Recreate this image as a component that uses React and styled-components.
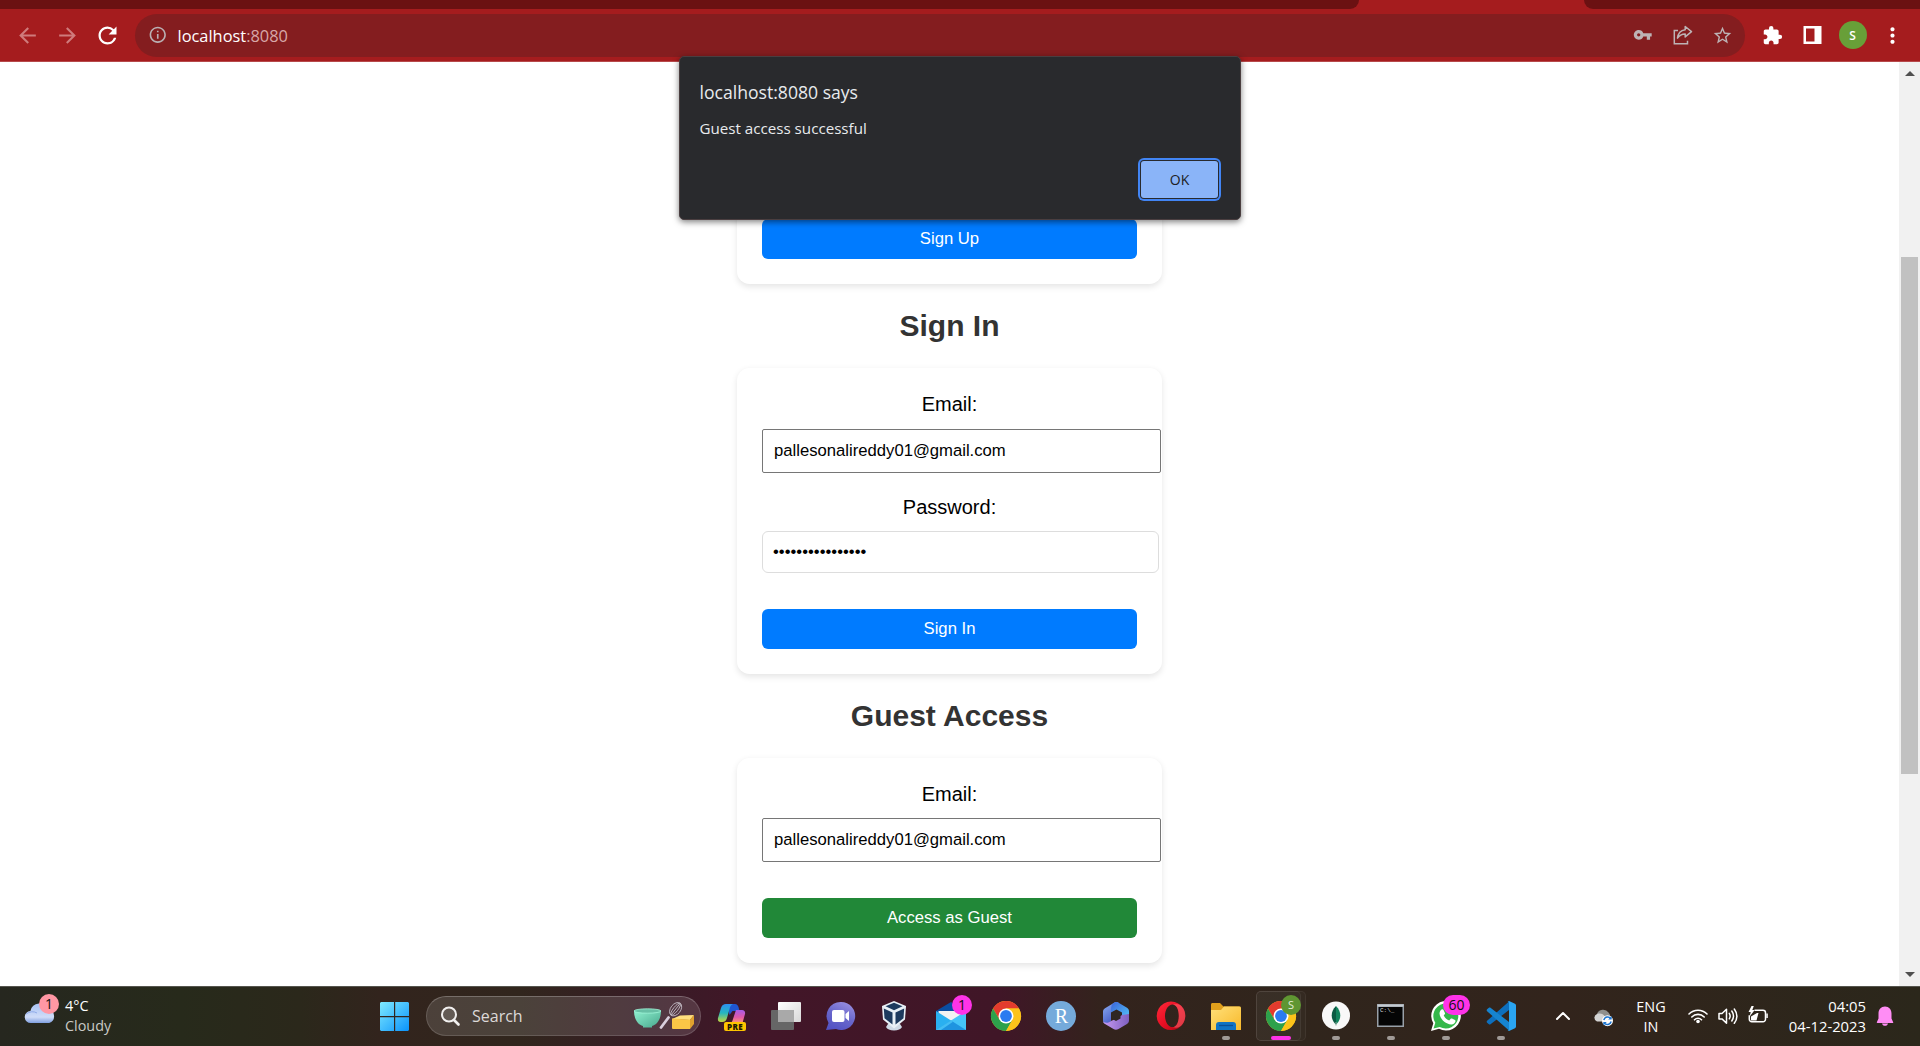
import React from "react";
import styled, { createGlobalStyle } from "styled-components";
import {
  MdArrowBack,
  MdArrowForward,
  MdRefresh,
  MdInfoOutline,
  MdVpnKey,
  MdStarBorder,
  MdExtension,
  MdMoreVert,
} from "react-icons/md";

const uiFont = `"Open Sans", "Noto Sans", sans-serif`;
const pageFont = `"Liberation Sans", Arial, sans-serif`;

const GlobalStyle = createGlobalStyle`
  * { box-sizing: border-box; }
  body { margin: 0; overflow: hidden; background: #fff; }
  svg { display: block; flex: none; }
`;

const Screen = styled.div`
  display: flex;
  flex-direction: column;
  width: 1920px;
  height: 1046px;
  position: relative;
  overflow: hidden;
  font-family: ${uiFont};
`;

/* ---------- browser chrome ---------- */

const TabStrip = styled.div`
  display: flex;
  justify-content: space-between;
  height: 9px;
  flex: none;
  background: #a51c1e;
`;

const StripSide = styled.div`
  width: ${(p) => p.$width}px;
  background: #6b1112;
  border-radius: ${(p) => (p.$left ? "0 0 10px 0" : "0 0 0 10px")};
`;

const Toolbar = styled.div`
  display: flex;
  align-items: center;
  height: 53px;
  flex: none;
  background: #a51c1e;
  border-bottom: 1px solid #b7494b;
`;

const NavButtons = styled.div`
  display: flex;
  width: 135px;
  padding-left: 15px;
  gap: 15px;
  flex: none;
`;

const IconBox = styled.span`
  display: flex;
  align-items: center;
  justify-content: center;
  width: 25px;
  height: 26px;
  flex: none;
  color: ${(p) => p.$color};
`;

const Omnibox = styled.div`
  display: flex;
  align-items: center;
  width: 1610px;
  height: 43px;
  padding: 0 10px;
  border-radius: 22px;
  background: #841d1f;
  flex: none;
`;

const Url = styled.span`
  flex: 1;
  margin-left: 7.5px;
  padding-top: 2px;
  font-size: 16.4px;
  line-height: 24px;
  color: #fff;
`;

const Port = styled.span`
  color: #d8a7a8;
`;

const OmniActions = styled.div`
  display: flex;
  gap: 15px;
`;

const BrowserActions = styled.div`
  display: flex;
  align-items: center;
  gap: 15px;
  padding-left: 15px;
`;

const Avatar = styled.span`
  display: flex;
  align-items: center;
  justify-content: center;
  width: 28px;
  height: 28px;
  margin: 0 -1.5px;
  border-radius: 50%;
  background: #689f38;
  color: #fff;
  font-size: 12px;
  font-weight: 600;
`;

/* ---------- page ---------- */

const Viewport = styled.div`
  display: flex;
  height: 924px;
  flex: none;
  background: #fff;
`;

const Content = styled.main`
  display: flex;
  flex-direction: column;
  align-items: center;
  width: 1899px;
  padding-top: 132px;
  overflow: hidden;
  font-family: ${pageFont};
`;

const Card = styled.section`
  display: flex;
  flex-direction: column;
  align-items: stretch;
  width: 425px;
  height: ${(p) => p.$height}px;
  padding: 25px;
  flex: none;
  border-radius: 12.5px;
  background: #fff;
  box-shadow: 0 2.5px 6px rgba(0, 0, 0, 0.1);
`;

const Heading = styled.h2`
  margin: 25px 0;
  height: 34px;
  flex: none;
  font-size: 30px;
  line-height: 34px;
  font-weight: 700;
  color: #333;
`;

const Label = styled.label`
  height: 24px;
  margin-top: ${(p) => p.$top}px;
  font-size: 20px;
  line-height: 24px;
  text-align: center;
  color: #000;
`;

const Field = styled.input`
  flex: none;
  width: ${(p) => (p.$soft ? 397 : 399)}px;
  height: ${(p) => (p.$soft ? 42 : 44)}px;
  margin: ${(p) => p.$top}px 0 0;
  padding: ${(p) => (p.$soft ? "0 10px 1px" : "0 11px")};
  border: 1px solid ${(p) => (p.$soft ? "#ddd" : "#767676")};
  border-radius: ${(p) => (p.$soft ? "6px" : "2px")};
  background: #fff;
  outline: none;
  color: #000;
  font-family: ${pageFont};
  font-size: 16.67px;
`;

const Submit = styled.button`
  flex: none;
  height: 40px;
  margin-top: auto;
  padding: 0;
  border: 0;
  border-radius: 6px;
  background: ${(p) => p.$bg};
  color: #fff;
  font-family: ${pageFont};
  font-size: 16.67px;
`;

const Scrollbar = styled.div`
  display: flex;
  flex-direction: column;
  align-items: center;
  width: 21px;
  padding: 9px 0;
  background: #f1f1f1;
`;

const Arrow = styled.span`
  width: 0;
  height: 0;
  border: 5px solid transparent;
  border-${(p) => (p.$up ? "bottom" : "top")}-color: #505050;
  border-${(p) => (p.$up ? "top" : "bottom")}-width: 0;
`;

const Thumb = styled.span`
  width: 17px;
  height: 517px;
  margin-top: 181px;
  margin-bottom: auto;
  background: #c1c1c1;
`;

/* ---------- alert ---------- */

const Dialog = styled.div`
  position: absolute;
  left: 679px;
  top: 56px;
  display: flex;
  flex-direction: column;
  width: 562px;
  height: 164px;
  padding: 20px 20px 21px 19.5px;
  border: 1px solid #4a3e40;
  border-radius: 5px;
  background: #292a2d;
  box-shadow: 0 2px 6px rgba(0, 0, 0, 0.5);
  color: #e8eaed;
`;

const DialogTitle = styled.div`
  margin-top: 2px;
  font-size: 17.6px;
  line-height: 26px;
`;

const DialogText = styled.div`
  margin-top: 11px;
  font-size: 15.15px;
  line-height: 24px;
`;

const OkButton = styled.button`
  align-self: flex-end;
  width: 77px;
  height: 37px;
  margin: auto 2px 0 0;
  padding: 0;
  border: 0;
  border-radius: 3px;
  background: #8ab4f8;
  box-shadow: 0 0 0 1px #292a2d, 0 0 0 3px #4285f4;
  color: #202124;
  font-family: ${uiFont};
  font-size: 14px;
`;

/* ---------- taskbar ---------- */

const Taskbar = styled.footer`
  display: flex;
  height: 60px;
  flex: none;
  border-top: 1px solid #55554e;
  background: linear-gradient(
    90deg,
    #26271f 0,
    #272a1b 180px,
    #2b281b 300px,
    #32241d 380px,
    #31261d 520px,
    #381c26 650px,
    #421628 760px,
    #401627 1000px,
    #33231d 1100px,
    #30251c 1300px,
    #32241c 1560px,
    #2b271b 1920px
  );
`;

const Weather = styled.div`
  display: flex;
  width: 373px;
  padding-left: 20px;
  flex: none;
`;

const WeatherIcon = styled.div`
  position: relative;
  width: 45px;
  flex: none;
`;

const TwoLines = styled.div`
  display: flex;
  flex-direction: column;
  align-items: ${(p) => p.$align};
  padding-top: ${(p) => p.$top || 9}px;
  font-size: ${(p) => p.$size || 14.4}px;
  line-height: 20px;
  color: #fff;
`;

const Muted = styled.span`
  color: #c9c9c5;
`;

const StartCell = styled.div`
  width: 53px;
  flex: none;
`;

const SearchPill = styled.div`
  display: flex;
  align-items: center;
  width: 275px;
  height: 40px;
  margin: 9px 2px 0 0;
  flex: none;
  border: 1px solid rgba(255, 255, 255, 0.14);
  border-top-color: rgba(255, 255, 255, 0.24);
  border-radius: 20px;
  background: rgba(255, 255, 255, 0.13);
`;

const SearchText = styled.span`
  flex: 1;
  margin-left: 11px;
  font-size: 16px;
  line-height: 24px;
  color: #dcd9d8;
`;

const Apps = styled.div`
  display: flex;
  flex: none;
`;

const AppCell = styled.div`
  position: relative;
  width: 55px;
  height: 59px;
  flex: none;
`;

const ActiveTile = styled.span`
  position: absolute;
  left: ${(p) => p.$left}px;
  top: 4px;
  width: ${(p) => p.$width}px;
  height: 50px;
  border: 1px solid rgba(255, 255, 255, 0.06);
  border-radius: 5px;
  background: rgba(255, 255, 255, 0.025);
`;

const AppIcon = styled.svg`
  position: relative;
`;

const Badge = styled.span`
  position: absolute;
  left: ${(p) => p.$left}px;
  top: ${(p) => p.$top}px;
  width: ${(p) => p.$width}px;
  height: 20px;
  border-radius: 10px;
  background: ${(p) => p.$bg || "#ff33e8"};
  color: ${(p) => p.$color || "#111"};
  font-size: ${(p) => p.$size || 14}px;
  line-height: 19px;
  text-align: center;
`;

const Indicator = styled.span`
  position: absolute;
  left: ${(p) => (p.$active ? 18 : 24)}px;
  top: 49px;
  width: ${(p) => (p.$active ? 20 : 8)}px;
  height: 4px;
  border-radius: 2px;
  background: ${(p) => (p.$active ? "#ff33e8" : "#a09a96")};
`;

const PreTag = styled.span`
  position: absolute;
  left: 21px;
  top: 35px;
  width: 22px;
  height: 9px;
  border-radius: 2px;
  background: #fdc400;
  color: #1c1600;
  font-size: 8px;
  font-weight: 800;
  line-height: 9.5px;
  letter-spacing: 0.4px;
  text-align: center;
`;

const LetterR = styled.span`
  position: absolute;
  left: 13px;
  top: 14px;
  width: 31px;
  color: #fff;
  font-family: "Liberation Serif", serif;
  font-size: 20px;
  line-height: 30px;
  text-align: center;
`;

const Prompt = styled.span`
  position: absolute;
  left: 17px;
  top: 20px;
  color: #ddd;
  font-family: "Liberation Mono", monospace;
  font-size: 6px;
  line-height: 7px;
`;

const Tray = styled.div`
  display: flex;
  margin-left: auto;
  color: #fff;
`;

const TraySlot = styled.div`
  display: flex;
  justify-content: center;
  width: ${(p) => p.$width}px;
  flex: none;
`;

const TrayDate = styled.div`
  display: flex;
  justify-content: flex-end;
  width: 84px;
  flex: none;
`;

/* ---------- icons ---------- */

const ShareIcon = () => (
  <svg width="22" height="22" viewBox="0 0 22 22" fill="none" stroke="#bdb3b5" strokeWidth="1.5">
    <path d="M6 6.500H2.300v13.200h13.200v-3" />
    <path d="M13.200 2.500l6.300 5.200-6.300 5.200V10C9.600 10 7.300 11.300 5.500 14.200 6 9.600 8.400 6.300 13.200 5.700z" strokeLinejoin="round" />
  </svg>
);

const PanelIcon = () => (
  <svg width="20" height="20" viewBox="0 0 20 20">
    <path fill="#fff" fillRule="evenodd" d="M.5 1h18v18h-18zM3 3.400v13.200h8.500V3.400z" />
  </svg>
);

const CloudIcon = () => (
  <svg width="44" height="59" viewBox="20 987 44 59">
    <defs>
      <linearGradient id="cloud" x1="0" y1="0" x2="0" y2="1">
        <stop offset="0" stopColor="#a9c3f5" />
        <stop offset="0.700" stopColor="#cfdcf8" />
        <stop offset="1" stopColor="#7f9fe0" />
      </linearGradient>
    </defs>
    <path fill="url(#cloud)" d="M31 1023a6 6 0 0 1-.6-12 9.500 9.500 0 0 1 18.200-1.500 7 7 0 0 1 .6 13.500z" />
    <path d="M26 1014q6-4 11-1" fill="none" stroke="#8fabe8" strokeWidth="1" />
  </svg>
);

const StartIcon = () => (
  <svg width="44" height="59" viewBox="373 987 44 59">
    <defs>
      <linearGradient id="win" x1="380" y1="1002" x2="409" y2="1031" gradientUnits="userSpaceOnUse">
        <stop offset="0" stopColor="#7feaff" />
        <stop offset="1" stopColor="#0a93fb" />
      </linearGradient>
    </defs>
    <path fill="url(#win)" d="M381 1002h13v14h-14v-13zM395.200 1002h12.800l1 1v13h-13.800zM380 1017.200h14v13.800h-13l-1-1zM395.200 1017.200H409V1030l-1 1h-12.800z" />
  </svg>
);

const Magnifier = () => (
  <svg width="34" height="38" viewBox="427 997 34 38" fill="none" stroke="#f1efee">
    <circle cx="449" cy="1014.500" r="7" strokeWidth="2" fill="#ffffff22" />
    <path d="M454 1020l4.500 4.500" strokeWidth="2.600" strokeLinecap="round" />
  </svg>
);

const Baking = () => (
  <svg width="70" height="38" viewBox="630 997 70 38">
    <defs>
      <linearGradient id="bowl" x1="0" y1="0" x2="1" y2="1">
        <stop offset="0" stopColor="#8ff0cf" />
        <stop offset="1" stopColor="#48a88d" />
      </linearGradient>
    </defs>
    <path fill="url(#bowl)" d="M634 1011c0 8 4 14 9 15v1.500h9V1026c5-1 9-7 9-15z" />
    <ellipse cx="647.500" cy="1011" rx="13.500" ry="2.200" fill="#68c0a6" stroke="#9ff5d8" strokeWidth="0.800" />
    <g fill="none" stroke="#bcb4bd" strokeWidth="0.900" transform="rotate(38 675 1010)">
      <ellipse cx="675" cy="1009" rx="5" ry="7.500" />
      <ellipse cx="675" cy="1009" rx="2.300" ry="7.500" />
      <path d="M675 1001.500v15" />
    </g>
    <path d="M661 1027.500l7.500-10" stroke="#d9cfdd" strokeWidth="2.800" strokeLinecap="round" />
    <path d="M672 1019l8-3.500 14-.5-4 5z" fill="#ffe07e" />
    <path d="M672 1018.500l18 1.200v9.300h-17q-1 0-1-1z" fill="#fbc646" />
    <path d="M690 1019.700l4-4.700v9l-4 5z" fill="#e0a22e" />
  </svg>
);

const cellBox = (i) => `${703 + i * 55} 987 55 59`;

const Icon = ({ i, children }) => (
  <AppIcon width="55" height="59" viewBox={cellBox(i)}>
    {children}
  </AppIcon>
);

const ChromeLogo = ({ cx }) => (
  <g transform={`translate(${cx} 1016)`}>
    <circle r="15" fill="#fbc116" />
    <path d="M-13 -7.500A15 15 0 0 1 13 -7.500L0 -7.500L-6.500 3.750Z" fill="#e33b2e" />
    <path d="M-13 -7.500A15 15 0 0 0 0 15L6.500 3.750L0 0L-6.500 3.750Z" fill="#2da14c" />
    <path d="M0 15A15 15 0 0 0 13 -7.500L0 -7.500L6.500 3.750Z" fill="#fcc31a" />
    <circle r="7.500" fill="#fff" />
    <circle r="5.900" fill="#2b7bf0" />
  </g>
);

const CopilotLogo = () => (
  <Icon i={0}>
    <defs>
      <linearGradient id="cop1" x1="0" y1="0" x2="0" y2="1">
        <stop offset="0" stopColor="#2d8ff0" />
        <stop offset="0.500" stopColor="#25b5c0" />
        <stop offset="1" stopColor="#c6d63a" />
      </linearGradient>
      <linearGradient id="cop2" x1="0" y1="0" x2="0" y2="1">
        <stop offset="0" stopColor="#a65ce8" />
        <stop offset="0.550" stopColor="#e058a8" />
        <stop offset="1" stopColor="#ff9a70" />
      </linearGradient>
    </defs>
    <path fill="#1f56d0" d="M727 1004h8c2 0 3 1.500 3.500 3l1 4h-7l-3 4z" />
    <path fill="url(#cop1)" d="M726 1004h7c-2 1-3 2.500-3.500 5l-2.500 9c-.8 2.500-2 4-4.500 4h-2c-2 0-3-1.500-2.500-4l3-10c.8-2.500 2.500-4 5-4z" />
    <path fill="url(#cop2)" d="M736 1010h6c2.500 0 3.500 2 3 4l-2.500 9h-12c1.500-1 2-2 2.500-4z" />
  </Icon>
);

const TaskViewLogo = () => (
  <Icon i={1}>
    <defs>
      <linearGradient id="tv" x1="0" y1="0" x2="1" y2="1">
        <stop offset="0" stopColor="#fff" />
        <stop offset="1" stopColor="#d8d8d8" />
      </linearGradient>
    </defs>
    <rect x="771" y="1010" width="23" height="20" rx="1" fill="#666" />
    <rect x="778" y="1002" width="23" height="20" rx="1" fill="url(#tv)" />
    <rect x="778" y="1010" width="16" height="12" fill="#a9a9a9" />
  </Icon>
);

const ChatLogo = () => (
  <Icon i={2}>
    <defs>
      <linearGradient id="chat" x1="0.800" y1="0" x2="0.300" y2="1">
        <stop offset="0" stopColor="#9a8fe0" />
        <stop offset="0.500" stopColor="#6a68cc" />
        <stop offset="1" stopColor="#5352c4" />
      </linearGradient>
    </defs>
    <path fill="url(#chat)" d="M841 1002a14 14 0 1 1-5 27l-10 1 2.500-7A14 14 0 0 1 841 1002z" />
    <rect x="832" y="1010" width="12.500" height="12" rx="2" fill="#fff" />
    <path fill="#fff" d="M845.500 1014l3.500-3v10l-3.500-3z" />
  </Icon>
);

const BoxLogo = () => (
  <Icon i={3}>
    <path fill="#cfdae6" d="M888 1024h12l2 3c-1 2-4 3.500-8 3.500s-7-1.500-8-3.500z" />
    <path fill="#e9f0f6" d="M894 1001l12 5-1 13.500-11 9-11-9-1-13.500z" />
    <path fill="#1d3a5e" d="M894 1002.800l8.500 3.500-8.500 4-8.500-4z" />
    <path fill="#1d3a5e" d="M883.800 1008.500l8.700 4v12l-8-6.300zM904.200 1008.500l-8.700 4v12l8-6.300z" />
  </Icon>
);

const MailLogo = () => (
  <Icon i={4}>
    <path fill="#0a4da0" d="M936 1011l15-9 15 9v8h-30z" />
    <path fill="#f2f2f2" d="M938.500 1011h25v10l-12.500 6-12.500-6z" />
    <path fill="#2ab0f0" d="M936 1011l30 19h-30z" />
    <path fill="#45c4f8" d="M966 1011v19h-30z" />
    <path fill="#1e94e0" d="M951 1020.500l15 9.500h-30z" />
    <path fill="#43bdf3" d="M936 1030l15-9.500 2 1.300-12 8.200z" />
  </Icon>
);

const M365Logo = () => (
  <Icon i={7}>
    <defs>
      <linearGradient id="m1" x1="0" y1="0" x2="0.600" y2="1">
        <stop offset="0" stopColor="#8fb2f5" />
        <stop offset="1" stopColor="#4257c4" />
      </linearGradient>
      <linearGradient id="m2" x1="0" y1="0" x2="1" y2="1">
        <stop offset="0" stopColor="#3c64d8" />
        <stop offset="1" stopColor="#53c8fb" />
      </linearGradient>
      <linearGradient id="m3" x1="0" y1="0" x2="1" y2="0">
        <stop offset="0" stopColor="#c79af0" />
        <stop offset="1" stopColor="#7e5fc0" />
      </linearGradient>
    </defs>
    <path fill="url(#m1)" d="M1115 1002.300l-10 6c-1.300.8-2 2-2 3.500v8.700c0 2 1.500 3.500 3.500 3.500s4.500-1.500 4.500-4v-8l8-9c-1.500-1-2.500-1.500-4-.7z" />
    <path fill="url(#m2)" d="M1113.500 1003c2-1.300 3.500-1.300 5.500 0l8 4.700c1.300.8 2 2 2 3.500v8.800c-2-3-4-4-7-4v-3.500l-5.500-3-5.500 3c0-4 0-8 2.500-9.500z" />
    <path fill="url(#m3)" d="M1129 1014v6.500c0 1.500-.7 2.700-2 3.500l-8.500 5c-1.700 1-3.500 1-5 0l-8.500-5c-1-.6-1.600-1.500-2-2.500 3 2 5.500 1.500 8-.5l4.500-2 6.500-4z" />
    <path fill="#2f2723" d="M1116 1010.500l4.500 2.600v5.300l-4.500 2.600-4.500-2.600v-5.300z" />
  </Icon>
);

const OperaLogo = () => (
  <Icon i={8}>
    <defs>
      <linearGradient id="op" x1="0" y1="0" x2="1" y2="1">
        <stop offset="0" stopColor="#ff2a3a" />
        <stop offset="0.500" stopColor="#e80f24" />
        <stop offset="1" stopColor="#a80410" />
      </linearGradient>
    </defs>
    <path fill="url(#op)" fillRule="evenodd" d="M1171 1001.500a14.300 14.300 0 1 0 .01 0zM1172.500 1004.500c4 0 6.300 5 6.300 11.300s-2.300 11.300-6.300 11.300-7.500-5-7.500-11.300 3.500-11.300 7.500-11.300z" />
    <path fill="#ff6670" opacity="0.550" d="M1172.500 1004.500c5-1.500 8 0 9.500 2.300 2.500 2.500 3.300 6 3.300 9s-1 6-3 8.700c-2 2.500-5 4-9.800 2.600 4 0 6.300-5 6.300-11.300s-2.300-11.300-6.300-11.300z" />
  </Icon>
);

const FolderLogo = () => (
  <Icon i={9}>
    <defs>
      <linearGradient id="fold" x1="0" y1="0" x2="1" y2="1">
        <stop offset="0" stopColor="#ffe07a" />
        <stop offset="1" stopColor="#f8b92a" />
      </linearGradient>
    </defs>
    <path fill="#e0a01c" d="M1211 1012v-7.500c0-.8.600-1.500 1.500-1.500h7.500l3.500 3.500h16v8z" />
    <path fill="url(#fold)" d="M1211 1010h10l3-3.500h15.500c1 0 1.500.7 1.500 1.500v22h-30z" />
    <path fill="#1173c4" d="M1216 1030v-5c0-2 1-3 3-3h14c2 0 3 1 3 3v5z" />
    <path d="M1219 1025.500h14" stroke="#0b4f96" strokeWidth="1.300" />
  </Icon>
);

const MongoLogo = () => (
  <Icon i={11}>
    <circle cx="1336" cy="1015.500" r="14" fill="#f8f8f8" />
    <path fill="#11835c" d="M1336 1006c4 4 4.800 8 4 12-.7 3-2.200 5-4 6.500z" />
    <path fill="#0a5a43" d="M1336 1006c-4 4-4.800 8-4 12 .7 3 2.200 5 4 6.500z" />
    <path d="M1336 1022v3.500" stroke="#8fa99b" strokeWidth="1" />
  </Icon>
);

const CmdLogo = () => (
  <Icon i={12}>
    <rect x="1377" y="1004" width="27" height="23" fill="#98a0a8" />
    <rect x="1377.500" y="1004.500" width="26" height="2" fill="#c4cad0" />
    <rect x="1378.500" y="1007" width="24" height="18.500" fill="#050505" />
  </Icon>
);

const WhatsAppLogo = () => (
  <Icon i={13}>
    <path fill="#fff" d="M1431 1031l2.300-7.700a14.800 14.800 0 1 1 5.700 5.500z" />
    <path fill="#35b84b" d="M1433.500 1028.500l1.800-5.700a12.500 12.500 0 1 1 4.500 4.200z" />
    <path fill="#fff" d="M1441.500 1009.500c.6-.5 1.500-.5 1.900.2l1.500 3.200c.2.500.1.900-.2 1.300l-1 1.300c1.300 2.500 3 4 5.500 5l1.500-1.700c.3-.4.800-.5 1.300-.3l3 1.500c.5.300.6.7.5 1.300-.4 2-2.200 3.300-4.300 3.200-6-.5-11.500-6-11.700-11 0-1.500.8-3 2-4z" />
  </Icon>
);

const CodeLogo = () => (
  <Icon i={14}>
    <path fill="#0d6fbd" d="M1509 1001.500v8.500l-18.500 14.300c-.5.400-1.100.4-1.600 0l-1.800-1.600c-.6-.5-.6-1.400 0-1.900z" />
    <path fill="#1684d0" d="M1509 1030.500V1022l-18.500-14.300c-.5-.4-1.100-.4-1.600 0l-1.800 1.600c-.6.500-.6 1.400 0 1.900z" />
    <path fill="#2aa5f2" d="M1509 1001l6 2.800c.6.300 1 .9 1 1.500v21.400c0 .6-.4 1.200-1 1.500l-6 2.800-1.500-.8c.9.400 1.500-.3 1.500-1.200v-26c0-.9-.6-1.600-1.500-1.200z" />
  </Icon>
);

const ChevronIcon = () => (
  <svg width="30" height="59" viewBox="1548 987 30 59" fill="none" stroke="#fff" strokeWidth="2">
    <path d="M1557 1019l6-6 6 6" strokeLinecap="round" strokeLinejoin="round" />
  </svg>
);

const SyncCloudIcon = () => (
  <svg width="30" height="59" viewBox="1588 987 30 59">
    <path fill="#8f8f8d" d="M1597 1014a6.500 6.500 0 0 1 11.500-1.500 5 5 0 0 1 1 6l-6 3z" />
    <path fill="#d4d4d4" d="M1597 1021.500a4 4 0 0 1 0-7.500c4-1 6 0 8 2.700l1 4.800z" />
    <circle cx="1607.500" cy="1020.700" r="5.500" fill="#fff" />
    <path d="M1603.800 1020a4 4 0 0 1 7-1.500M1611.200 1021.500a4 4 0 0 1-7 1.500" fill="none" stroke="#1a73cf" strokeWidth="1.500" />
    <path d="M1611.700 1016v3.500h-3.500zM1603.300 1025.500v-3.500h3.500z" fill="#1a73cf" />
  </svg>
);

const WifiIcon = () => (
  <svg width="24" height="59" viewBox="1686 987 24 59" fill="none" stroke="#fff" strokeWidth="1.600" strokeLinecap="round">
    <path d="M1689 1014a12.700 12.700 0 0 1 18 0M1691.800 1017a8.700 8.700 0 0 1 12.400 0M1694.500 1019.800a5 5 0 0 1 7 0" />
    <circle cx="1698" cy="1021.500" r="1.300" fill="#fff" stroke="none" />
    <circle cx="1698" cy="1021.500" r="1" fill="#fff" />
  </svg>
);

const SpeakerIcon = () => (
  <svg width="24" height="59" viewBox="1716 987 24 59" fill="none" stroke="#fff" strokeWidth="1.500" strokeLinecap="round" strokeLinejoin="round">
    <path d="M1719 1013.500h3l4.500-4.300v14l-4.500-4.300h-3z" />
    <path d="M1729.300 1013.300q1.700 2.700 0 5.500M1731.800 1011q3.400 5 0 10M1734.300 1009q5.200 7.200 0 14.300" />
  </svg>
);

const BatteryIcon = () => (
  <svg width="24" height="59" viewBox="1746 987 24 59">
    <path d="M1754.500 1010.300h8.500a2.500 2.500 0 0 1 2.500 2.500v6.400a2.500 2.500 0 0 1-2.500 2.500h-11.200a2.500 2.500 0 0 1-2.500-2.500v-4" fill="none" stroke="#fff" strokeWidth="1.500" />
    <path fill="#fff" d="M1766.300 1013.500h1.500v4.500h-1.500zM1751 1020.500v-4l6-3.500 1.500 0-2 7.500zM1751.500 1006l-3 6h2.200l-1 4.500 5-6.500h-2.400l1.500-4z" />
  </svg>
);

const BellIcon = () => (
  <svg width="54" height="59" viewBox="1866 987 54 59" fill="#ff8df5">
    <path d="M1885 1006.500c4 0 6.500 3 6.500 7v5l1.700 3.700c.2.500-.1.800-.6.800h-15.200c-.5 0-.8-.3-.6-.8l1.700-3.700v-5c0-4 2.500-7 6.500-7z" />
    <path d="M1882 1023.500h6c-.4 1.500-1.500 2.300-3 2.300s-2.600-.8-3-2.300z" />
  </svg>
);

/* ---------- app ---------- */

const EMAIL = "pallesonalireddy01@gmail.com";
const PASSWORD = "•".repeat(16);

export default function App() {
  return (
    <Screen>
      <GlobalStyle />
      <TabStrip>
        <StripSide $left $width={1359} />
        <StripSide $width={336} />
      </TabStrip>
      <Toolbar>
        <NavButtons>
          <IconBox $color="#cf7b7c"><MdArrowBack size={25} /></IconBox>
          <IconBox $color="#cf7b7c"><MdArrowForward size={25} /></IconBox>
          <IconBox $color="#fff"><MdRefresh size={27} /></IconBox>
        </NavButtons>
        <Omnibox>
          <IconBox $color="#bab0b3"><MdInfoOutline size={19.5} /></IconBox>
          <Url>localhost<Port>:8080</Port></Url>
          <OmniActions>
            <IconBox $color="#bdb3b5"><MdVpnKey size={19.5} /></IconBox>
            <IconBox><ShareIcon /></IconBox>
            <IconBox $color="#bdb3b5"><MdStarBorder size={21} /></IconBox>
          </OmniActions>
        </Omnibox>
        <BrowserActions>
          <IconBox $color="#fff"><MdExtension size={21} /></IconBox>
          <IconBox><PanelIcon /></IconBox>
          <Avatar>S</Avatar>
          <IconBox $color="#fff"><MdMoreVert size={25} /></IconBox>
        </BrowserActions>
      </Toolbar>

      <Viewport>
        <Content>
          <Card $height={90}>
            <Submit $bg="#007bff">Sign Up</Submit>
          </Card>
          <Heading>Sign In</Heading>
          <Card $height={306}>
            <Label $top={-1}>Email:</Label>
            <Field $top={13} type="text" defaultValue={EMAIL} />
            <Label $top={22}>Password:</Label>
            <Field $top={12} $soft type="text" defaultValue={PASSWORD} />
            <Submit $bg="#007bff">Sign In</Submit>
          </Card>
          <Heading>Guest Access</Heading>
          <Card $height={205}>
            <Label $top={-1}>Email:</Label>
            <Field $top={12} type="text" defaultValue={EMAIL} />
            <Submit $bg="#218838">Access as Guest</Submit>
          </Card>
        </Content>
        <Scrollbar>
          <Arrow $up />
          <Thumb />
          <Arrow />
        </Scrollbar>
      </Viewport>

      <Taskbar>
        <Weather>
          <WeatherIcon>
            <CloudIcon />
            <Badge $left={19} $top={7} $width={20} $bg="#ff97a4">1</Badge>
          </WeatherIcon>
          <TwoLines $align="flex-start">
            <span>4°C</span>
            <Muted>Cloudy</Muted>
          </TwoLines>
        </Weather>
        <StartCell><StartIcon /></StartCell>
        <SearchPill>
          <Magnifier />
          <SearchText>Search</SearchText>
          <Baking />
        </SearchPill>
        <Apps>
          <AppCell><CopilotLogo /><PreTag>PRE</PreTag></AppCell>
          <AppCell><TaskViewLogo /></AppCell>
          <AppCell><ChatLogo /></AppCell>
          <AppCell><BoxLogo /></AppCell>
          <AppCell><MailLogo /><Badge $left={29} $top={8} $width={20}>1</Badge></AppCell>
          <AppCell><Icon i={5}><ChromeLogo cx={1006} /></Icon></AppCell>
          <AppCell>
            <Icon i={6}><circle cx="1061" cy="1016" r="15" fill="#75aadb" /></Icon>
            <LetterR>R</LetterR>
          </AppCell>
          <AppCell><M365Logo /></AppCell>
          <AppCell><OperaLogo /></AppCell>
          <AppCell><FolderLogo /><Indicator /></AppCell>
          <AppCell>
            <ActiveTile $left={3} $width={50} />
            <ActiveTile $left={3} $width={45} />
            <Icon i={10}><ChromeLogo cx={1281} /></Icon>
            <Badge $left={28} $top={8} $width={20} $bg="#5f9632" $color="#e4efd8" $size={11}>S</Badge>
            <Indicator $active />
          </AppCell>
          <AppCell><MongoLogo /><Indicator /></AppCell>
          <AppCell><CmdLogo /><Prompt>C:\_</Prompt><Indicator /></AppCell>
          <AppCell>
            <WhatsAppLogo />
            <Badge $left={25} $top={8} $width={27}>60</Badge>
            <Indicator />
          </AppCell>
          <AppCell><CodeLogo /><Indicator /></AppCell>
        </Apps>
        <Tray>
          <TraySlot $width={30}><ChevronIcon /></TraySlot>
          <TraySlot $width={50}><SyncCloudIcon /></TraySlot>
          <TraySlot $width={46}>
            <TwoLines $align="center" $top={10}><span>ENG</span><span>IN</span></TwoLines>
          </TraySlot>
          <TraySlot $width={48}><WifiIcon /></TraySlot>
          <TraySlot $width={12}><SpeakerIcon /></TraySlot>
          <TraySlot $width={48}><BatteryIcon /></TraySlot>
          <TrayDate>
            <TwoLines $align="flex-end" $top={8.5} $size={14.8}>
              <span>04:05</span>
              <span>04-12-2023</span>
            </TwoLines>
          </TrayDate>
          <BellIcon />
        </Tray>
      </Taskbar>

      <Dialog role="alertdialog">
        <DialogTitle>localhost:8080 says</DialogTitle>
        <DialogText>Guest access successful</DialogText>
        <OkButton>OK</OkButton>
      </Dialog>
    </Screen>
  );
}
